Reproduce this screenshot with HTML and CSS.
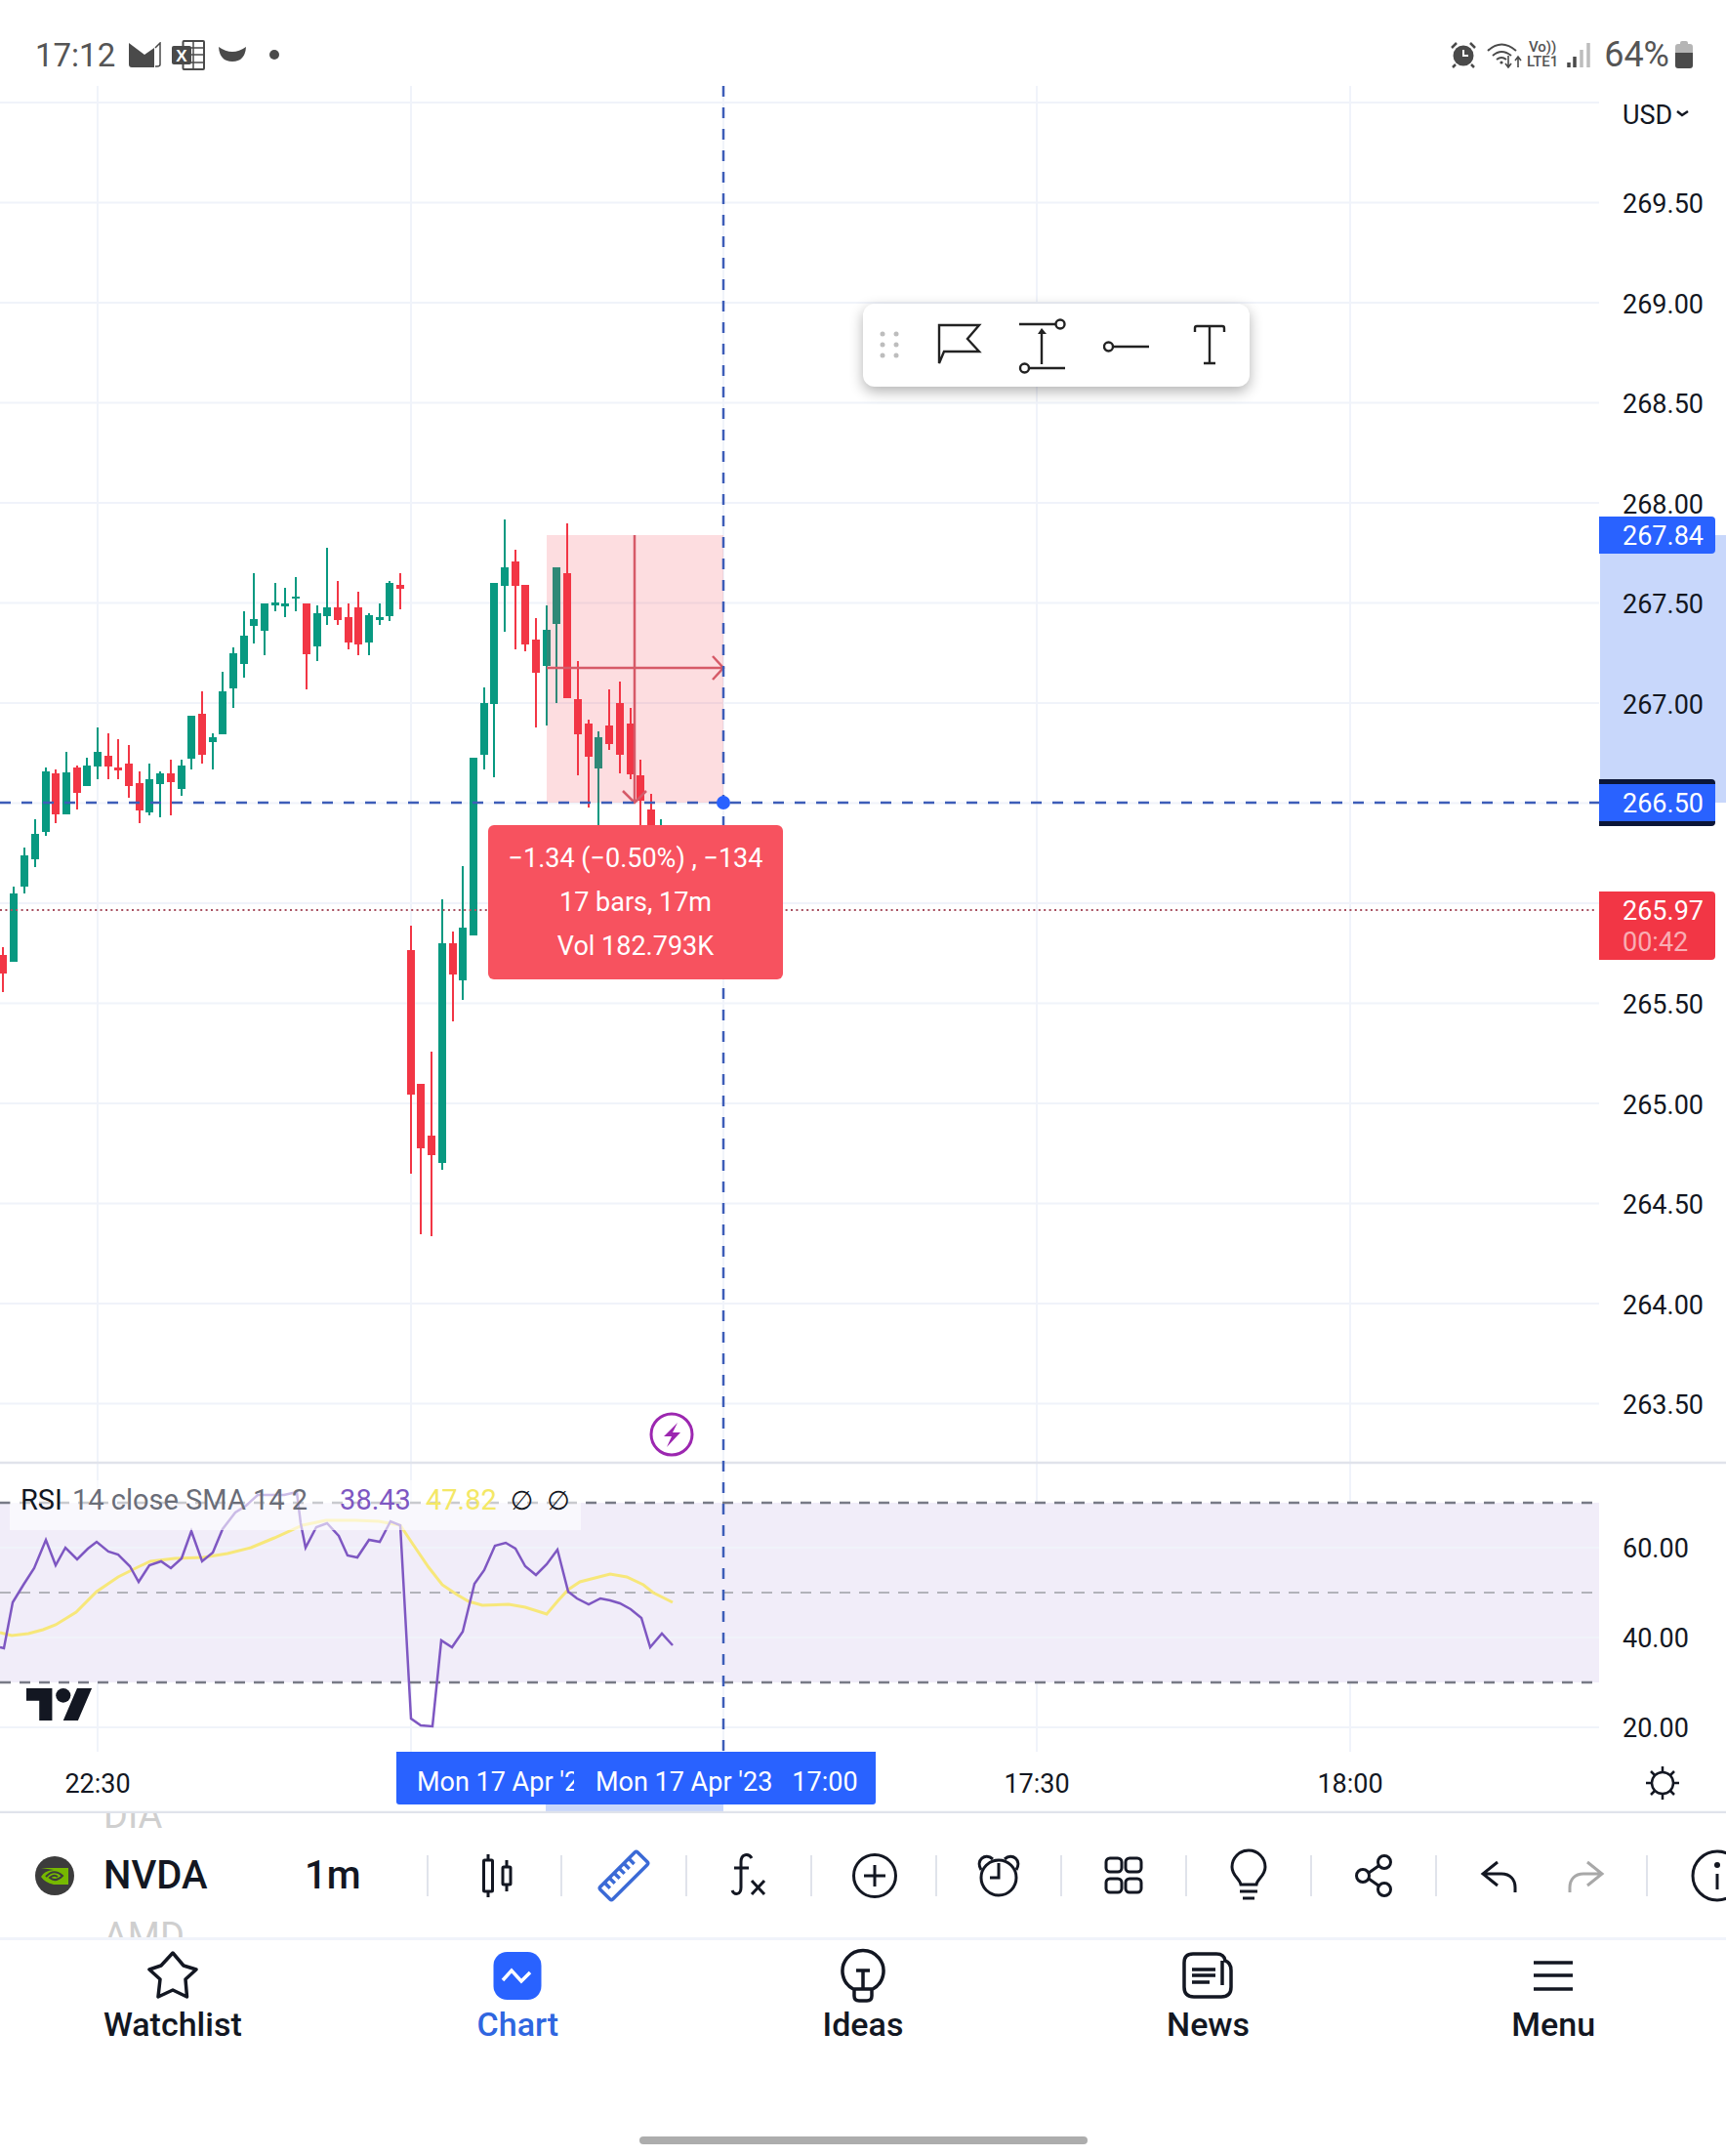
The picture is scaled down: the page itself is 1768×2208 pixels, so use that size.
FILE: index.html
```html
<!DOCTYPE html>
<html lang="en">
<head>
  <meta charset="UTF-8">
  <title>NVDA Chart</title>
  <link rel="stylesheet" href="styles.css">
</head>
<body>
  <div class="page">

    <!-- Status bar -->
    <div class="status">
      <div class="status-left">
        <span class="clock">17:12</span>
        <svg class="st-mail" width="33" height="26" viewBox="0 0 33 26"><path d="M0 1 L16 13 L26 6 V26 H3 Q0 26 0 23 Z" fill="#4a4a4a"/><path d="M27 6 L32 1 V23 Q32 25 29 25 H27" fill="none" stroke="#4a4a4a" stroke-width="1.5"/></svg>
        <svg class="st-excel" width="34" height="31" viewBox="0 0 34 31"><rect x="11.5" y="1" width="21.5" height="29" rx="1" fill="#fff" stroke="#4a4a4a" stroke-width="2"/><path d="M22 1 V30 M12 8 H33 M12 15 H33 M12 23 H33" stroke="#4a4a4a" stroke-width="1.5"/><rect x="0" y="6" width="20" height="19" rx="2" fill="#4a4a4a"/><text x="10" y="22" text-anchor="middle" class="st-x">X</text></svg>
        <svg class="st-moon" width="28" height="16" viewBox="0 0 28 16"><path d="M0 0 Q14 10 28 0 Q27 15 14 15 Q1 15 0 0 Z" fill="#4a4a4a"/></svg>
        <span class="st-dot"></span>
      </div>
      <div class="status-right">
        <svg width="26" height="27" viewBox="0 0 26 27"><circle cx="13" cy="14" r="10.5" fill="#4a4a4a"/><path d="M13 8 V14 H18" fill="none" stroke="#fff" stroke-width="2"/><path d="M1 6 L6 1 M25 6 L20 1 M5 23 L2 26 M21 23 L24 26" stroke="#4a4a4a" stroke-width="2.5"/></svg>
        <svg class="st-wifi" width="36" height="27" viewBox="0 0 36 27"><path d="M1 9 Q15 -4 30 9 M6 14 Q15 6 25 14 M10 18 Q15 14 20 18" fill="none" stroke="#4a4a4a" stroke-width="2"/><circle cx="15" cy="21" r="1.6" fill="#4a4a4a"/><path d="M22 14 V25 M19 22 L22 26 L25 22 M32 26 V16 M29 19 L32 15 L35 19" fill="none" stroke="#4a4a4a" stroke-width="1.6"/></svg>
        <div class="volte"><span>Vo))</span><span>LTE1</span></div>
        <svg class="st-signal" width="24" height="26" viewBox="0 0 24 26"><path d="M2 21 V26 M8 15 V26" stroke="#4a4a4a" stroke-width="3.5"/><path d="M15 8 V26 M22 1 V26" stroke="#bdbdbd" stroke-width="3.5"/></svg>
        <span class="percent">64%</span>
        <svg class="st-battery" width="18" height="28" viewBox="0 0 18 28"><path d="M5 3 V2 Q5 0 7 0 H11 Q13 0 13 2 V3 H15 Q18 3 18 6 V12 H0 V6 Q0 3 3 3 Z" fill="#b5b5b5"/><path d="M0 12 H18 V25 Q18 28 15 28 H3 Q0 28 0 25 Z" fill="#4a4a4a"/></svg>
      </div>
    </div>

    <!-- Chart -->
    <div class="chart">
      <svg class="chart-canvas" width="1768" height="1769" viewBox="0 88 1768 1769">
        <g class="grid">
          <path d="M100 88 V1794 M421 88 V1794 M741 88 V1794 M1062 88 V1794 M1383 88 V1794"/>
          <path d="M0 105 H1638 M0 207.5 H1638 M0 310 H1638 M0 412.5 H1638 M0 515 H1638 M0 617.5 H1638 M0 720 H1638 M0 822.5 H1638 M0 925 H1638 M0 1027.5 H1638 M0 1130 H1638 M0 1232.5 H1638 M0 1335 H1638 M0 1437.5 H1638"/>
        </g>

        <rect x="1639" y="548" width="129" height="274" fill="#c8d7fb"/>
        <rect x="559" y="1848" width="182" height="8" fill="#c8d7fb"/>

        <!-- RSI pane -->
        <rect x="0" y="1539" width="1638" height="184" fill="#f1edf9"/>
        <g class="grid">
          <path d="M0 1585 H1638 M0 1677 H1638 M0 1769 H1638"/>
        </g>
        <path class="rsi-limit" d="M0 1539 H1638 M0 1723 H1638"/>
        <path class="rsi-mid" d="M0 1631 H1638"/>
        <polyline class="rsi-sma" points="0,1672 12,1675 29,1673 44,1669 57,1664 78,1651 99,1630 121,1615 141,1605 154,1599 179,1596 208,1595 233,1591 257,1585 281,1575 310,1562 334,1557 364,1557 388,1558 410,1562 424,1583 439,1605 453,1623 468,1633 480,1640 494,1644 521,1643 538,1646 560,1653 571,1640 582,1628 594,1620 625,1612 642,1615 659,1623 669,1631 689,1641"/>
        <polyline class="rsi-line" points="0,1687 4,1688 13,1641 24,1623 35,1606 47,1577 57,1603 67,1585 79,1597 90,1586 99,1579 111,1589 121,1592 133,1604 142,1620 153,1603 165,1599 175,1606 186,1596 196,1568 207,1599 218,1590 228,1566 241,1549 252,1542 264,1531 279,1531 291,1531 304,1528 308,1560 313,1585 324,1564 335,1560 347,1573 356,1593 366,1595 378,1577 389,1579 400,1558 410,1562 421,1760 431,1767 443,1768 452,1680 463,1687 474,1671 486,1622 496,1608 507,1583 518,1580 528,1586 538,1604 549,1613 560,1602 571,1587 582,1630 591,1637 603,1643 615,1637 625,1639 635,1642 646,1648 657,1657 666,1687 678,1673 689,1685"/>
        <path class="pane-line" d="M0 1498 H1768 M0 1856 H1768"/>

        <!-- candles go here, see chart.js -->
        <g id="candles"></g>

        <!-- measure tool -->
        <rect x="560" y="548" width="181" height="274" fill="#f23645" fill-opacity="0.17"/>
        <path class="measure" d="M650 548 V822 M638 810 L650 822 L662 810 M560 684 H741 M730 672 L741 684 L730 696"/>
        <path class="close-line" d="M0 932 H1634"/>
        <path class="cross-line" d="M0 822 H1638 M741 88 V1794"/>
        <circle cx="741" cy="822" r="7" fill="#2962ff"/>

        <circle cx="688" cy="1469" r="21" fill="#fff" stroke="#9c27b0" stroke-width="3"/>
        <path d="M694 1457 L680 1471 H688 L683 1482 L697 1467 H689 Z" fill="#9c27b0"/>

        <!-- axes -->
        <g class="tick">
          <text x="1662" y="127">USD</text>
          <text x="1662" y="218">269.50</text>
          <text x="1662" y="321">269.00</text>
          <text x="1662" y="423">268.50</text>
          <text x="1662" y="526">268.00</text>
          <text x="1662" y="628">267.50</text>
          <text x="1662" y="731">267.00</text>
          <text x="1662" y="1038">265.50</text>
          <text x="1662" y="1141">265.00</text>
          <text x="1662" y="1243">264.50</text>
          <text x="1662" y="1346">264.00</text>
          <text x="1662" y="1448">263.50</text>
          <text x="1662" y="1595">60.00</text>
          <text x="1662" y="1687">40.00</text>
          <text x="1662" y="1779">20.00</text>
          <text x="100" y="1836" text-anchor="middle">22:30</text>
          <text x="1062" y="1836" text-anchor="middle">17:30</text>
          <text x="1383" y="1836" text-anchor="middle">18:00</text>
        </g>
        <path d="M1718 114 L1723 118 L1729 114" fill="none" stroke="#131722" stroke-width="2.5"/>

        <g fill="none" stroke="#131722" stroke-width="2.5">
          <circle cx="1703" cy="1826" r="11"/>
          <path d="M1703 1809 V1815 M1703 1837 V1843 M1686 1826 H1692 M1714 1826 H1720 M1691 1814 L1695 1818 M1711 1834 L1715 1838 M1715 1814 L1711 1818 M1695 1834 L1691 1838"/>
        </g>

        <!-- TradingView mark -->
        <svg x="27" y="1729" width="68" height="33" viewBox="0 4 36 18" preserveAspectRatio="none">
          <path d="M14 22H7V11H0V4h14v18zM28 22h-8l7.5-18h8L28 22z" fill="#131722"/>
          <circle cx="20" cy="8" r="4" fill="#131722"/>
        </svg>
      </svg>

      <div class="tag tag-last">267.84</div>
      <div class="tag tag-cross">266.50</div>
      <div class="tag tag-close">265.97<span>00:42</span></div>

      <div class="time-tag">
        <span class="time-clip">Mon 17 Apr '23</span>
        <span class="time-date">Mon 17 Apr '23</span>
        <span class="time-hour">17:00</span>
      </div>

      <div class="measure-box">
        <div>−1.34 (−0.50%) , −134</div>
        <div>17 bars, 17m</div>
        <div>Vol 182.793K</div>
      </div>

      <div class="legend">
        <span class="lg-name">RSI</span>
        <span class="lg-args">14 close SMA 14 2</span>
        <span class="lg-rsi">38.43</span>
        <span class="lg-sma">47.82</span>
        <span class="lg-na">∅</span>
        <span class="lg-na">∅</span>
      </div>

      <!-- Floating drawing tools -->
      <div class="float-tools">
        <svg width="30" height="60" viewBox="0 0 30 60"><g fill="#bdbdbd"><circle cx="9" cy="18" r="2.5"/><circle cx="23" cy="18" r="2.5"/><circle cx="9" cy="29" r="2.5"/><circle cx="23" cy="29" r="2.5"/><circle cx="9" cy="40" r="2.5"/><circle cx="23" cy="40" r="2.5"/></g></svg>
        <svg width="55" height="60" viewBox="0 0 55 60"><path class="ln" d="M7 9 H48 L36 23 L48 36 H12 L7 48 Z"/></svg>
        <svg width="55" height="60" viewBox="0 0 55 60"><path class="ln" d="M4 8 H42 M27 49 V16 M14 53 H51"/><circle class="ln" cx="46" cy="8" r="4.5"/><circle class="ln" cx="9.5" cy="53" r="4.5"/><path d="M23 18 L27 12 L32 18 Z" fill="#222"/></svg>
        <svg class="ft-trend" width="50" height="60" viewBox="0 0 50 60"><circle class="ln" cx="5.5" cy="31" r="4.5"/><path class="ln" d="M10 31 H47"/></svg>
        <svg class="ft-text" width="38" height="60" viewBox="0 0 38 60"><path class="ln" d="M4 16 V12 Q4 10 6 10 H32 Q34 10 34 12 V16 M19 10 V48 M13 48 H25"/></svg>
      </div>
    </div>

    <!-- Symbol toolbar -->
    <div class="toolbar">
      <div class="symbol">
        <svg class="sym-logo" width="40" height="40" viewBox="0 0 40 40">
          <circle cx="20" cy="20" r="20" fill="#3c3c3c"/>
          <path d="M6 12 H34 V29 H19 Q10 27 6 21 Q9 15 19 14 Z" fill="#76b900"/>
          <path d="M11 21 Q19 12 28 20 Q21 27 15 22 Q19 18 23 21" fill="none" stroke="#3c3c3c" stroke-width="2"/>
        </svg>
        <div class="wheel">
          <span>DIA</span>
          <span class="wheel-on">NVDA</span>
          <span>AMD</span>
        </div>
        <span class="interval">1m</span>
      </div>

      <div class="tool tool-candle">
        <svg width="60" height="60" viewBox="0 0 60 60"><path class="ic" d="M23 8 V14 M23 46 V52 M42 14 V21 M42 39 V46"/><rect class="ic" x="18.5" y="14" width="9" height="32" rx="1"/><rect class="ic" x="38" y="21" width="8" height="18" rx="1"/></svg>
      </div>
      <div class="tool">
        <svg width="60" height="60" viewBox="0 0 60 60"><g transform="rotate(-45 30 30)"><rect class="ic-blue" x="3" y="21" width="54" height="18" rx="2"/><path class="ic-blue" d="M11 21 V29 M18 21 V29 M25 21 V29 M32 21 V29 M39 21 V29 M46 21 V29"/></g></svg>
      </div>
      <div class="tool">
        <svg width="60" height="60" viewBox="0 0 60 60"><path class="ic" d="M33 12 C30 7 22 7 22 16 V42 C22 50 15 50 13 45 M15 22 H30 M33 35 L46 49 M46 35 L33 49"/></svg>
      </div>
      <div class="tool">
        <svg width="60" height="60" viewBox="0 0 60 60"><circle class="ic" cx="31" cy="30" r="21.5"/><path class="ic" d="M20 30 H42 M31 19 V41"/></svg>
      </div>
      <div class="tool">
        <svg width="60" height="60" viewBox="0 0 60 60"><circle class="ic" cx="30" cy="32" r="18"/><path class="ic" d="M12 24 C6 14 16 6 24 13 M48 24 C54 14 44 6 36 13 M30 17 V32 H21"/></svg>
      </div>
      <div class="tool">
        <svg width="60" height="60" viewBox="0 0 60 60"><rect class="ic" x="12" y="12" width="16" height="14" rx="4"/><rect class="ic" x="32" y="12" width="16" height="14" rx="4"/><rect class="ic" x="12" y="33" width="16" height="14" rx="4"/><rect class="ic" x="32" y="33" width="16" height="14" rx="4"/></svg>
      </div>
      <div class="tool">
        <svg width="60" height="60" viewBox="0 0 60 60"><path class="ic" d="M22 39 C21 33 13 30 13 21 A17 17 0 0 1 47 21 C47 30 39 33 38 39 Z M21 46 H39"/><path class="ic" stroke-width="4" d="M24 53 H36"/></svg>
      </div>
      <div class="tool">
        <svg width="60" height="60" viewBox="0 0 60 60"><circle class="ic" cx="41" cy="16" r="6.5"/><circle class="ic" cx="19" cy="30" r="6.5"/><circle class="ic" cx="41" cy="44" r="6.5"/><path class="ic" d="M35 20 L25 27 M25 33 L35 40"/></svg>
      </div>
      <div class="tool tool-history">
        <svg width="60" height="60" viewBox="0 0 60 60"><path class="ic" d="M30 16 L15 28 L30 40 M15 28 H34 C43 28 48 34 48 42 V47"/></svg>
        <svg class="redo" width="60" height="60" viewBox="0 0 60 60"><path class="ic ic-off" d="M30 16 L45 28 L30 40 M45 28 H26 C17 28 12 34 12 42 V47"/></svg>
      </div>
      <div class="tool tool-info">
        <svg width="60" height="60" viewBox="0 0 60 60"><circle class="ic" cx="30" cy="30" r="25"/><circle cx="30" cy="19" r="3" fill="#131722"/><path class="ic" stroke-width="4" d="M30 28 V44"/></svg>
      </div>
    </div>

    <!-- Bottom tabs -->
    <div class="tabs">
      <div class="tab">
        <svg width="60" height="60" viewBox="0 0 60 60"><polygon class="tb" points="30,8 41,21 54,25 43,35 44.5,53 30,46 15,53 17,35 6,25 18,21"/></svg>
        <span>Watchlist</span>
      </div>
      <div class="tab tab-on">
        <svg width="60" height="60" viewBox="0 0 60 60"><rect x="5.5" y="7" width="49" height="49" rx="14" fill="#2962ff"/><path d="M15 36 L24 26 L34 37 L43 28" fill="none" stroke="#fff" stroke-width="3.5"/></svg>
        <span>Chart</span>
      </div>
      <div class="tab">
        <svg width="60" height="60" viewBox="0 0 60 60"><path class="tb" d="M20 45 A21 21 0 1 1 40 45 Z M23 26 H37 M30 26 V45 M21 46 V52 Q21 57 26 57 H34 Q39 57 39 52 V46"/></svg>
        <span>Ideas</span>
      </div>
      <div class="tab">
        <svg width="60" height="60" viewBox="0 0 60 60"><path class="tb" d="M14 9 H38 Q46 9 47 16 Q53 18 53 26 V43 Q53 53 43 53 H15 Q5 53 5 43 V18 Q5 9 14 9 Z M44 16 V41 M13 25 H37 M13 31 H37 M13 38 H31"/></svg>
        <span>News</span>
      </div>
      <div class="tab">
        <svg width="60" height="60" viewBox="0 0 60 60"><path class="tb" stroke-width="4.5" d="M10 18 H50 M10 31 H50 M10 45 H50"/></svg>
        <span>Menu</span>
      </div>
    </div>

    <div class="home-bar"></div>
  </div>

  <script src="chart.js"></script>
</body>
</html>
```

FILE: styles.css
```css
body {
  margin: 0;
  background: white;
  font-family: Roboto, "Liberation Sans", sans-serif;
  color: #131722;
}

.page {
  width: 1768px;
  height: 2208px;
  display: flex;
  flex-direction: column;
  overflow: hidden;
}

/* status bar */
.status {
  height: 64px;
  padding: 24px 34px 0 36px;
  display: flex;
  justify-content: space-between;
  align-items: center;
  color: #555;
}

.status-left,
.status-right {
  display: flex;
  align-items: center;
}

.clock {
  font-size: 33px;
}

.percent {
  font-size: 36px;
}

.st-mail { margin-left: 14px; }
.st-excel { margin-left: 11px; }
.st-moon { margin-left: 14px; }

.st-x {
  font-family: "Liberation Sans", sans-serif;
  font-size: 17px;
  font-weight: bold;
  fill: white;
}

.st-dot {
  width: 10px;
  height: 10px;
  margin-left: 24px;
  border-radius: 50%;
  background: #4a4a4a;
}

.st-wifi { margin-left: 11px; }

.volte {
  margin-left: 4px;
  width: 34px;
  display: flex;
  flex-direction: column;
  align-items: center;
  font-size: 15px;
  font-weight: 500;
  line-height: 15px;
}

.st-signal { margin-left: 8px; }
.percent { margin-left: 14px; }
.st-battery { margin-left: 6px; }

/* chart */
.chart {
  position: relative;
  height: 1769px;
  flex: none;
}

.chart-canvas {
  position: absolute;
  left: 0;
  top: 0;
}

.grid path {
  fill: none;
  stroke: #f0f3fa;
  stroke-width: 2;
}

.pane-line {
  fill: none;
  stroke: #e0e3eb;
  stroke-width: 2.5;
}

.rsi-limit {
  fill: none;
  stroke: #787b86;
  stroke-width: 2.5;
  stroke-dasharray: 11 9;
}

.rsi-mid {
  fill: none;
  stroke: #b2b2ba;
  stroke-width: 2;
  stroke-dasharray: 11 9;
}

.rsi-line {
  fill: none;
  stroke: #7e57c2;
  stroke-width: 2.5;
}

.rsi-sma {
  fill: none;
  stroke: #f7e77a;
  stroke-width: 3;
}

.measure {
  fill: none;
  stroke: #d65a68;
  stroke-width: 2.5;
}

.close-line {
  fill: none;
  stroke: #a85060;
  stroke-width: 2;
  stroke-dasharray: 2 3.4;
}

.cross-line {
  fill: none;
  stroke: #3d5db8;
  stroke-width: 2.5;
  stroke-dasharray: 11 11;
}

.tick text {
  font-size: 27px;
  fill: #131722;
}

/* price tags */
.tag {
  position: absolute;
  left: 1638px;
  width: 95px;
  padding-left: 24px;
  border-radius: 0 4px 4px 0;
  background: #2962ff;
  color: white;
  font-size: 27px;
}

.tag-last {
  top: 441px;
  height: 38px;
  line-height: 40px;
}

.tag-cross {
  top: 710px;
  height: 38px;
  line-height: 40px;
  border-top: 5px solid #0b1638;
  border-bottom: 5px solid #0b1638;
}

.tag-close {
  top: 825px;
  height: 66px;
  padding-top: 4px;
  line-height: 32px;
  background: #f23645;
}

.tag-close span {
  display: block;
  color: rgba(255, 255, 255, 0.6);
}

/* time tag */
.time-tag {
  position: absolute;
  left: 406px;
  top: 1706px;
  width: 470px;
  height: 46px;
  padding: 8px 0 0 21px;
  display: flex;
  align-items: center;
  background: #2962ff;
  border-radius: 0 0 3px 3px;
  color: white;
  font-size: 27px;
  white-space: nowrap;
}

.time-clip {
  width: 161px;
  flex: none;
  overflow: hidden;
}

.time-date { margin-left: 22px; }
.time-hour { margin-left: 20px; }

/* measure box */
.measure-box {
  position: absolute;
  left: 500px;
  top: 757px;
  width: 302px;
  height: 158px;
  padding-top: 12px;
  box-sizing: border-box;
  background: #f7525f;
  border-radius: 6px;
  color: white;
  font-size: 27px;
  line-height: 45px;
  text-align: center;
}

/* rsi legend */
.legend {
  position: absolute;
  left: 10px;
  top: 1428px;
  width: 574px;
  height: 36px;
  padding: 2px 0 13px 11px;
  display: flex;
  align-items: center;
  background: rgba(255, 255, 255, 0.6);
  font-size: 29px;
}

.lg-args {
  margin-left: 10px;
  color: #6a6d78;
}

.lg-rsi {
  margin-left: 33px;
  color: #7e57c2;
}

.lg-sma {
  margin-left: 15px;
  color: #f4e866;
}

.lg-na {
  margin-left: 14px;
  font-family: "DejaVu Sans", sans-serif;
  font-size: 27px;
}

/* floating tools */
.float-tools {
  position: absolute;
  left: 884px;
  top: 223px;
  width: 396px;
  height: 85px;
  padding-left: 11px;
  box-sizing: border-box;
  display: flex;
  align-items: center;
  gap: 30px;
  background: white;
  border-radius: 12px;
  box-shadow: 0 5px 14px rgba(0, 0, 0, 0.3);
}

.ft-trend { margin-left: 5px; }
.ft-text { margin-left: 10px; }

.ln {
  fill: none;
  stroke: #222;
  stroke-width: 2.4;
}

/* toolbar */
.toolbar {
  height: 127px;
  flex: none;
  display: flex;
  align-items: center;
  overflow: hidden;
}

.symbol {
  width: 437px;
  flex: none;
  padding-left: 36px;
  box-sizing: border-box;
  display: flex;
  align-items: center;
  font-size: 40px;
  font-weight: 500;
}

.sym-logo {
  flex: none;
}

.wheel {
  width: 206px;
  margin-left: 30px;
  display: flex;
  flex-direction: column;
  color: #cfcfcf;
  font-size: 38px;
  font-weight: 400;
  line-height: 62px;
}

.wheel-on {
  color: #131722;
  font-size: 40px;
  font-weight: 500;
}

.tool {
  width: 128px;
  height: 42px;
  flex: none;
  display: flex;
  align-items: center;
  justify-content: center;
  border-left: 2px solid #e0e3eb;
  box-sizing: border-box;
}

.tool-candle { width: 137px; }

.tool-history {
  width: 216px;
  justify-content: flex-start;
  padding-left: 32px;
}

.redo { margin-left: 32px; }

.tool-info {
  width: 140px;
  justify-content: flex-start;
  padding-left: 41px;
}

.ic {
  fill: none;
  stroke: #131722;
  stroke-width: 3;
}

.ic-off { stroke: #a8a8a8; }

.ic-blue {
  fill: none;
  stroke: #3b6ad6;
  stroke-width: 3.5;
}

/* tabs */
.tabs {
  flex: 1;
  display: flex;
  padding-top: 5px;
  border-top: 3px solid #f0f3fa;
}

.tab {
  flex: 1;
  display: flex;
  flex-direction: column;
  align-items: center;
  font-size: 34px;
  font-weight: 500;
  line-height: 38px;
}

.tab span {
  margin-top: 2px;
}

.tab-on span {
  color: #2f66e0;
}

.tb {
  fill: none;
  stroke: #131722;
  stroke-width: 3.5;
  stroke-linejoin: round;
}

.home-bar {
  width: 459px;
  height: 8px;
  margin: 0 auto 12px;
  border-radius: 4px;
  background: #adadad;
}
```

FILE: chart.js
```js
// x, colour, wick top, body top, body bottom, wick bottom
const candles = [
  [3, 'r', 970, 978, 997, 1016], [14, 'g', 908, 915, 985, 985], [25, 'g', 868, 876, 908, 915],
  [36, 'g', 839, 854, 880, 888], [47, 'g', 786, 790, 852, 856], [57, 'r', 788, 792, 834, 843],
  [68, 'g', 770, 791, 834, 834], [79, 'r', 784, 786, 812, 829], [89, 'g', 776, 784, 805, 805],
  [100, 'g', 745, 770, 785, 798], [111, 'r', 751, 774, 785, 798], [121, 'r', 757, 786, 789, 798],
  [132, 'r', 763, 782, 805, 817], [143, 'r', 790, 802, 830, 843], [153, 'g', 782, 798, 832, 835],
  [164, 'g', 790, 792, 803, 837], [175, 'r', 778, 792, 801, 835], [186, 'g', 778, 784, 808, 815],
  [196, 'g', 733, 733, 777, 788], [207, 'r', 708, 731, 773, 782], [218, 'g', 751, 755, 760, 788],
  [228, 'g', 688, 708, 752, 752], [239, 'g', 663, 669, 705, 725], [250, 'g', 626, 651, 680, 694],
  [260, 'g', 587, 634, 641, 659], [271, 'g', 618, 618, 646, 671], [282, 'g', 597, 617, 620, 626],
  [292, 'g', 602, 618, 621, 632], [303, 'g', 591, 611, 613, 626], [314, 'r', 618, 618, 670, 706],
  [325, 'g', 620, 628, 662, 677], [335, 'g', 561, 622, 631, 640], [346, 'r', 595, 622, 635, 640],
  [357, 'r', 618, 632, 658, 665], [367, 'r', 606, 622, 660, 671], [378, 'g', 628, 630, 658, 671],
  [389, 'g', 618, 632, 635, 640], [399, 'g', 595, 597, 631, 636], [410, 'r', 587, 599, 603, 624],
  [421, 'r', 948, 973, 1121, 1202], [431, 'r', 1110, 1110, 1176, 1264], [442, 'r', 1077, 1163, 1183, 1266],
  [453, 'g', 921, 966, 1191, 1198], [464, 'r', 954, 966, 998, 1046], [474, 'g', 887, 950, 1004, 1024],
  [485, 'g', 776, 776, 958, 958], [496, 'g', 704, 720, 773, 788], [506, 'g', 597, 597, 721, 796],
  [517, 'g', 532, 581, 600, 647], [528, 'r', 563, 575, 600, 665], [538, 'r', 599, 599, 660, 667],
  [549, 'r', 633, 655, 689, 745], [560, 'g', 620, 645, 682, 743], [570, 'g', 581, 581, 639, 720],
  [581, 'r', 536, 587, 715, 715], [592, 'r', 677, 716, 752, 794], [603, 'r', 737, 741, 775, 827],
  [613, 'g', 749, 755, 787, 860], [624, 'r', 706, 743, 762, 768], [635, 'r', 698, 720, 773, 792],
  [646, 'r', 725, 741, 793, 798], [656, 'r', 778, 794, 820, 860], [667, 'r', 813, 829, 860, 860],
  [677, 'g', 839, 850, 860, 860]
];

const colours = { g: '#089981', r: '#f23645' };
const group = document.getElementById('candles');

function addRect(x, y, w, h, fill) {
  const r = document.createElementNS('http://www.w3.org/2000/svg', 'rect');
  r.setAttribute('x', x);
  r.setAttribute('y', y);
  r.setAttribute('width', w);
  r.setAttribute('height', h);
  r.setAttribute('fill', fill);
  group.appendChild(r);
}

candles.forEach(([x, c, wickTop, bodyTop, bodyBottom, wickBottom]) => {
  addRect(x - 1, wickTop, 2, wickBottom - wickTop, colours[c]);
  addRect(x - 4, bodyTop, 8, bodyBottom - bodyTop, colours[c]);
});
```
